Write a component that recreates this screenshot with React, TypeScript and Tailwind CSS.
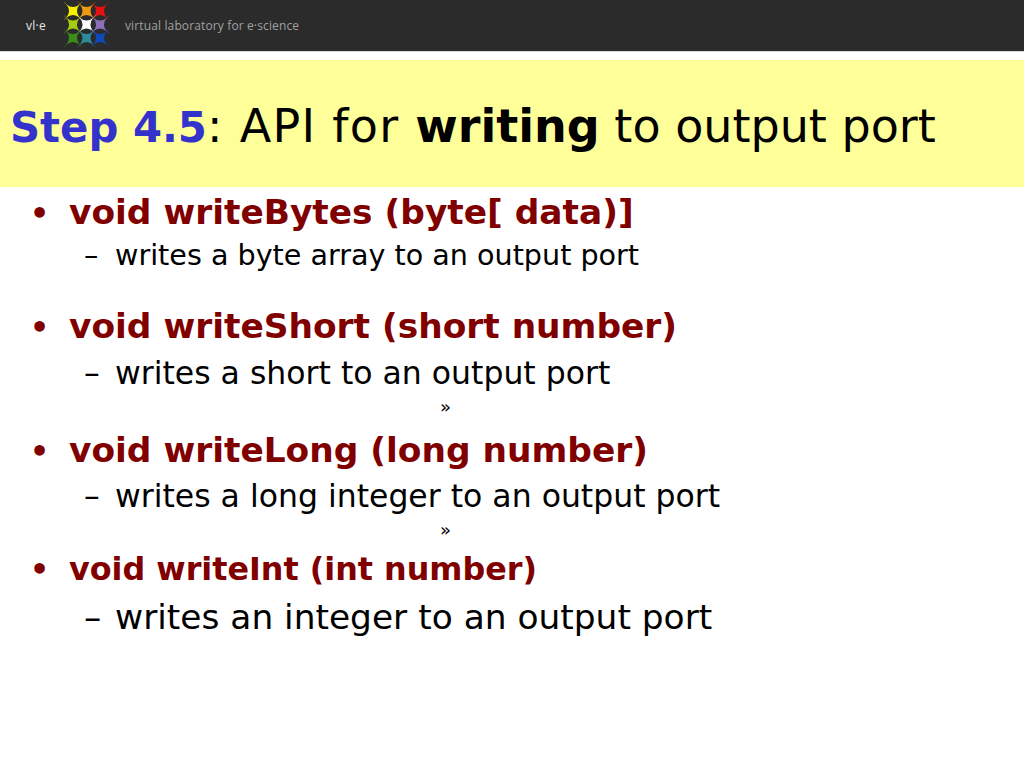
const colors = ["#f4f000","#f09a10","#e81010","#a4cc10","#ffffff","#8c70b8","#3c8c1c","#2c8c9c","#1048b8"];
const centers = [9, 22.5, 36];

function star(x: number, y: number, o: number, c: number) {
  return `M${x - o} ${y - o}Q${x} ${y - c} ${x + o} ${y - o}Q${x + c} ${y} ${x + o} ${y + o}Q${x} ${y + c} ${x - o} ${y + o}Q${x - c} ${y} ${x - o} ${y - o}Z`;
}

function Logo() {
  return (
    <svg width="46" height="46" viewBox="0 0 46 46" className="mb-[2px] block">
      {colors.map((c, i) => {
        const x = centers[i % 3];
        const y = centers[Math.floor(i / 3)];
        return (
          <g key={i} fill={c}>
            <path opacity="0.6" d={star(x, y, 10, -3.5)} />
            <path d={star(x, y, 6.5, 1.5)} />
          </g>
        );
      })}
    </svg>
  );
}

function Head({ children, size, bullet = "text-[30px]" }: { children: string; size: string; bullet?: string }) {
  return (
    <div className={`flex items-baseline font-bold text-[#800000] ${size}`}>
      <span className={`w-[69px] pl-[30px] ${bullet}`}>•</span>
      <span>{children}</span>
    </div>
  );
}

function Sub({ children, size }: { children: string; size: string }) {
  return (
    <div className={`flex items-baseline text-black ${size}`}>
      <span className="w-[115px] pl-[84px]">–</span>
      <span>{children}</span>
    </div>
  );
}

function Arrow() {
  return <div className="pl-[440px] text-[18px] leading-[20px] text-black">»</div>;
}

export default function App() {
  return (
    <div className="h-[768px] w-[1024px] overflow-hidden bg-white font-['DejaVu_Sans','Verdana',sans-serif]">
      <header className="flex h-[51px] items-center bg-[#2b2b2b] pl-[26px] font-['Open_Sans',sans-serif]">
        <span className="w-[38px] text-[12px] tracking-[0.3px] text-[#e8e8e8]">vl·e</span>
        <Logo />
        <span className="ml-[15px] text-[12px] tracking-[0.13px] text-[#a0a0a0]">virtual laboratory for e·science</span>
      </header>
      <div className="h-[1px] bg-[#d8d8d8]" />
      <div className="h-[8px]" />
      <div className="flex h-[127px] items-baseline bg-[#ffff99] pl-[10px] pt-[32px] text-[46px] text-black">
        <span className="text-[41.8px] font-bold text-[#3333cc]">Step 4.5</span>
        <span className="whitespace-pre tracking-[1.3px]">: API for </span>
        <span className="font-bold">writing</span>
        <span className="whitespace-pre"> to output port</span>
      </div>
      <main className="pt-[3px]">
        <Head size="text-[34.4px] leading-[44px]">void writeBytes (byte[ data)]</Head>
        <Sub size="text-[28.6px] leading-[38px]">writes a byte array to an output port</Sub>
        <div className="h-[30px]" />
        <Head size="text-[34.4px] leading-[44px]">void writeShort (short number)</Head>
        <Sub size="text-[31.5px] leading-[46px]">writes a short to an output port</Sub>
        <div className="h-[1px]" />
        <Arrow />
        <div className="h-[11px]" />
        <Head size="text-[34.4px] leading-[44px]">void writeLong (long number)</Head>
        <Sub size="text-[31.5px] leading-[44px]">writes a long integer to an output port</Sub>
        <div className="h-[2px]" />
        <Arrow />
        <div className="h-[7px]" />
        <Head size="text-[31.8px] leading-[44px]">void writeInt (int number)</Head>
        <Sub size="text-[34.4px] leading-[50px]">writes an integer to an output port</Sub>
      </main>
    </div>
  );
}
